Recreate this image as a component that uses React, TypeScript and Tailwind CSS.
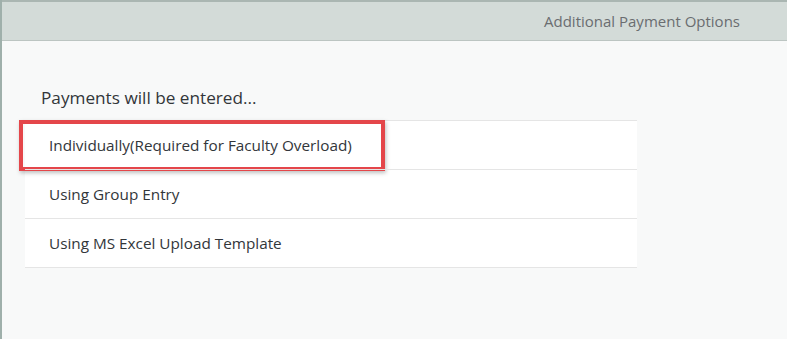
import React from 'react';

const options = [
    'Individually(Required for Faculty Overload)',
    'Using Group Entry',
    'Using MS Excel Upload Template',
];

const App: React.FC = () => {
    return (
        <div
            className="w-[787px] h-[339px] bg-[#f8f9f9] border-l-2 border-[#9fb0ab] flex flex-col overflow-hidden"
            style={{ fontFamily: '"Open Sans", "Liberation Sans", sans-serif' }}
        >
            {/* header bar */}
            <div className="h-[41px] shrink-0 bg-[#d3dbd8] border-t-2 border-[#aab6b2] border-b border-b-[#bcc5c2] flex items-center justify-end pr-[47px]">
                <span className="text-[15px] text-[#6a6d70]">Additional Payment Options</span>
            </div>

            <div className="pt-[45px] pl-[23px]">
                <div className="pl-[16px] pb-[10px] text-[17.2px] leading-[24px] text-[#32363a]">
                    Payments will be entered...
                </div>

                <ul className="w-[612px] bg-white">
                    {options.map((label, i) => (
                        <li
                            key={label}
                            className="relative h-[49px] border-t border-[#e5e5e5] last:border-b last:h-[50px] flex items-center pl-[24px] text-[15.3px] text-[#32363a]"
                        >
                            {label}
                            {i === 0 && (
                                <span className="absolute left-[-6px] top-[-1px] w-[366px] h-[51px] border-4 border-[#e4464a] shadow-[1px_2px_4px_rgba(0,0,0,0.25)]" />
                            )}
                        </li>
                    ))}
                </ul>
            </div>
        </div>
    );
};

export default App;
